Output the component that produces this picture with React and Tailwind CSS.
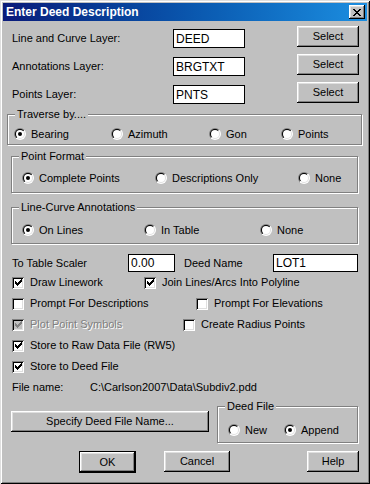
const raised =
  "bg-[#c0c0c0] shadow-[inset_-1px_-1px_#000,inset_1px_1px_#fff,inset_-2px_-2px_#808080,inset_2px_2px_#dfdfdf]";

function Radio({ checked, label }) {
  return (
    <span className="flex items-center gap-[5px] h-[14px]">
      <svg width="12" height="12" viewBox="0 0 12 12" className="shrink-0">
        <defs>
          <linearGradient id="ro" x1="0" y1="0" x2="1" y2="1">
            <stop offset="0.5" stopColor="#808080" />
            <stop offset="0.5" stopColor="#ffffff" />
          </linearGradient>
          <linearGradient id="ri" x1="0" y1="0" x2="1" y2="1">
            <stop offset="0.5" stopColor="#000000" />
            <stop offset="0.5" stopColor="#dfdfdf" />
          </linearGradient>
        </defs>
        <circle cx="6" cy="6" r="6" fill="url(#ro)" />
        <circle cx="6" cy="6" r="5" fill="url(#ri)" />
        <circle cx="6" cy="6" r="4" fill="#fff" />
        {checked && <circle cx="6" cy="6" r="2" fill="#000" />}
      </svg>
      <span className="whitespace-nowrap">{label}</span>
    </span>
  );
}

function Check({ checked, label, disabled }) {
  return (
    <span className="flex items-center gap-[6px] h-[21px]">
      <span
        className={`w-[12px] h-[12px] shrink-0 flex items-center justify-center ${
          disabled ? "bg-[#c0c0c0]" : "bg-white"
        } shadow-[inset_1px_1px_#808080,inset_-1px_-1px_#fff,inset_2px_2px_#000,inset_-2px_-2px_#dfdfdf]`}
      >
        {checked && (
          <svg width="7" height="7" viewBox="0 0 7 7" shapeRendering="crispEdges">
            {[2, 3, 4, 3, 2, 1, 0].map((y, x) => (
              <rect key={x} x={x} y={y} width="1" height="3" fill={disabled ? "#808080" : "#000"} />
            ))}
          </svg>
        )}
      </span>
      <span
        className={`whitespace-nowrap ${
          disabled ? "text-[#808080] [text-shadow:1px_1px_0_#fff]" : ""
        }`}
      >
        {label}
      </span>
    </span>
  );
}

function Group({ title, className, children }) {
  return (
    <div
      className={`relative border border-[#808080] shadow-[1px_1px_#fff,inset_1px_1px_#fff] ${className}`}
    >
      <span className="absolute left-[7px] -top-[7px] px-[2px] leading-[13px] bg-[#c0c0c0] whitespace-nowrap">
        {title}
      </span>
      {children}
    </div>
  );
}

function Field({ value, className }) {
  return (
    <div
      className={`bg-white border border-black pl-[2px] text-[12px] leading-[16px] flex items-center ${className}`}
    >
      {value}
    </div>
  );
}

export default function App() {
  const layers = [
    ["Line and Curve Layer:", "DEED"],
    ["Annotations Layer:", "BRGTXT"],
    ["Points Layer:", "PNTS"],
  ];

  return (
    <div className="w-[370px] h-[484px] bg-[#c0c0c0] p-[3px] flex flex-col text-[11px] text-black font-['Liberation_Sans',Arial,sans-serif] shadow-[inset_1px_1px_#dfdfdf,inset_-1px_-1px_#000,inset_2px_2px_#fff,inset_-2px_-2px_#808080]">
      {/* title bar */}
      <div className="h-[18px] shrink-0 flex items-center justify-between pl-[3px] pr-[2px] bg-gradient-to-r from-[#0a1a7a] to-[#1c8ee0]">
        <span className="text-white font-bold text-[12px]">Enter Deed Description</span>
        <span className={`w-[16px] h-[14px] flex items-center justify-center ${raised}`}>
          <svg width="8" height="7" viewBox="0 0 8 7" shapeRendering="crispEdges">
            {[0, 1, 2, 3, 4, 5, 6].map((y) => (
              <g key={y} fill="#000">
                <rect x={y < 4 ? y : 6 - y} y={y} width="2" height="1" />
                <rect x={y < 4 ? 6 - y : y} y={y} width="2" height="1" />
              </g>
            ))}
          </svg>
        </span>
      </div>

      {/* layer rows */}
      <div className="mt-[5px] ml-[9px] grid grid-cols-[161px_72px_52px_62px] auto-rows-[28px]">
        {layers.map(([label, value]) => (
          <div key={label} className="contents">
            <span className="mt-[3px] h-[19px] leading-[19px] whitespace-nowrap">{label}</span>
            <Field value={value} className="mt-[3px] h-[19px]" />
            <span />
            <button className={`h-[21px] ${raised}`}>Select</button>
          </div>
        ))}
      </div>

      <Group title="Traverse by...." className="mt-[4px] ml-[4px] w-[355px] h-[31px] pt-[12px] pl-[6px]">
        <div className="grid grid-cols-[97px_98px_72px_auto]">
          <Radio checked label="Bearing" />
          <Radio label="Azimuth" />
          <Radio label="Gon" />
          <Radio label="Points" />
        </div>
      </Group>

      <Group title="Point Format" className="mt-[11px] ml-[8px] w-[347px] h-[37px] pt-[14px] pl-[10px]">
        <div className="grid grid-cols-[133px_143px_auto]">
          <Radio checked label="Complete Points" />
          <Radio label="Descriptions Only" />
          <Radio label="None" />
        </div>
      </Group>

      <Group title="Line-Curve Annotations" className="mt-[14px] ml-[8px] w-[347px] h-[37px] pt-[15px] pl-[10px]">
        <div className="grid grid-cols-[122px_116px_auto]">
          <Radio checked label="On Lines" />
          <Radio label="In Table" />
          <Radio label="None" />
        </div>
      </Group>

      {/* scaler / deed name */}
      <div className="mt-[10px] ml-[9px] h-[18px] grid grid-cols-[116px_47px_9px_89px_85px] items-center">
        <span>To Table Scaler</span>
        <Field value="0.00" className="h-[18px]" />
        <span />
        <span>Deed Name</span>
        <Field value="LOT1" className="h-[18px]" />
      </div>

      {/* checkboxes */}
      <div className="ml-[9px] flex flex-col">
        <div className="flex">
          <div className="w-[132px]"><Check checked label="Draw Linework" /></div>
          <Check checked label="Join Lines/Arcs Into Polyline" />
        </div>
        <div className="flex">
          <div className="w-[184px]"><Check label="Prompt For Descriptions" /></div>
          <Check label="Prompt For Elevations" />
        </div>
        <div className="flex">
          <div className="w-[171px]"><Check checked disabled label="Plot Point Symbols" /></div>
          <Check label="Create Radius Points" />
        </div>
        <Check checked label="Store to Raw Data File (RW5)" />
        <Check checked label="Store to Deed File" />
        <div className="flex items-center h-[21px]">
          <span className="w-[78px]">File name:</span>
          <span>C:\Carlson2007\Data\Subdiv2.pdd</span>
        </div>
      </div>

      {/* deed file */}
      <div className="mt-[8px] ml-[8px] flex items-start gap-[8px]">
        <button className={`mt-[5px] w-[198px] h-[21px] ${raised}`}>Specify Deed File Name...</button>
        <Group title="Deed File" className="w-[141px] h-[37px] pt-[16px] pl-[10px]">
          <div className="grid grid-cols-[56px_auto]">
            <Radio label="New" />
            <Radio checked label="Append" />
          </div>
        </Group>
      </div>

      {/* dialog buttons */}
      <div className="mt-[8px] ml-[76px] flex items-start">
        <button className="w-[57px] h-[22px] border border-black bg-[#c0c0c0] shadow-[inset_-1px_-1px_#000,inset_1px_1px_#fff,inset_-2px_-2px_#808080,inset_2px_2px_#dfdfdf]">
          OK
        </button>
        <button className={`ml-[28px] w-[66px] h-[21px] ${raised}`}>Cancel</button>
        <button className={`ml-[77px] w-[52px] h-[21px] ${raised}`}>Help</button>
      </div>
    </div>
  );
}
